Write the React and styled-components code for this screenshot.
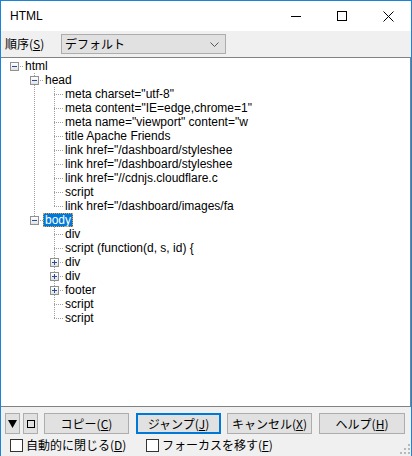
import React from 'react';
import styled, { createGlobalStyle } from 'styled-components';

const Global = createGlobalStyle`
  html, body { margin: 0; padding: 0; background: #f0f0f0; }
  body { width: 412px; height: 456px; overflow: hidden; }
`;

const Window = styled.div`
  width: 412px;
  height: 456px;
  box-sizing: border-box;
  border: 1px solid #1a85d8;
  border-bottom: none;
  display: flex;
  flex-direction: column;
  background: #f0f0f0;
  font-family: "Noto Sans CJK JP", sans-serif;
  font-size: 12px;
  color: #000;
`;

const TitleBar = styled.div`
  height: 30px;
  flex: none;
  background: #fff;
  display: flex;
  align-items: center;
`;

const Title = styled.div`
  flex: 1;
  padding-left: 9px;
  font: 12px "Liberation Sans", sans-serif;
`;

const Ctrl = styled.div`
  width: 46px;
  height: 30px;
  display: flex;
  align-items: center;
  justify-content: center;
`;

const Toolbar = styled.div`
  height: 26px;
  flex: none;
  display: flex;
  align-items: center;
  padding-left: 4px;
`;

const Label = styled.span`
  width: 56px;
  line-height: 16px;
`;

const U = styled.span`
  text-decoration: underline;
  text-underline-offset: 1px;
`;

const Select = styled.div`
  box-sizing: border-box;
  width: 165px;
  height: 20px;
  border: 1px solid #adadad;
  background: #e1e1e1;
  display: flex;
  align-items: center;
  padding: 0 6px 0 3px;
  line-height: 16px;
`;

const SelectText = styled.span`
  flex: 1;
`;

const Panel = styled.div`
  flex: 1;
  background: #fff;
  border: 1px solid #828282;
  border-left: none;
  padding-top: 1px;
  overflow: hidden;
`;

const Row = styled.div`
  display: flex;
  height: 14px;
  align-items: stretch;
`;

const vDots = `
  background-image: linear-gradient(to bottom, #a0a0a0 50%, transparent 50%);
  background-size: 1px 2px;
`;
const hDots = `
  background-image: linear-gradient(to right, #a0a0a0 50%, transparent 50%);
  background-size: 2px 1px;
`;

const Guide = styled.div`
  width: 20px;
  flex: none;
  position: relative;
  &::before {
    content: "";
    display: ${p => (p.$line ? 'block' : 'none')};
    position: absolute;
    left: 13px;
    top: 0;
    width: 1px;
    height: 14px;
    ${vDots}
  }
`;

const Conn = styled.div`
  width: 22px;
  flex: none;
  position: relative;
  &::before {
    content: "";
    display: ${p => (p.$top || p.$bottom ? 'block' : 'none')};
    position: absolute;
    left: 13px;
    top: ${p => (p.$top ? 0 : 7)}px;
    width: 1px;
    height: ${p => (p.$top && p.$bottom ? 14 : 7)}px;
    ${vDots}
  }
  &::after {
    content: "";
    position: absolute;
    left: 13px;
    top: 7px;
    width: 9px;
    height: 1px;
    ${hDots}
  }
`;

const Expander = styled.div`
  position: absolute;
  z-index: 1;
  left: 9px;
  top: 3px;
  width: 9px;
  height: 9px;
  box-sizing: border-box;
  border: 1px solid #919191;
  background: linear-gradient(180deg, #ffffff 0%, #e2e2e2 100%);
  &::before {
    content: "";
    position: absolute;
    left: 1px;
    top: 3px;
    width: 5px;
    height: 1px;
    background: #2a4a9c;
  }
  &::after {
    content: "";
    display: ${p => (p.$open ? 'none' : 'block')};
    position: absolute;
    left: 3px;
    top: 1px;
    width: 1px;
    height: 5px;
    background: #2a4a9c;
  }
`;

const NodeText = styled.span`
  font: 12px/14px "Liberation Sans", sans-serif;
  padding: 0 2px;
  white-space: pre;
  background: ${p => (p.$sel ? '#0078d7' : 'transparent')};
  color: ${p => (p.$sel ? '#fff' : '#000')};
  outline: ${p => (p.$sel ? '1px dotted #f0a030' : 'none')};
  outline-offset: -1px;
`;

const Footer = styled.div`
  height: 49px;
  flex: none;
  padding: 6px 0 0 4px;
  box-sizing: border-box;
  display: flex;
  flex-direction: column;
`;

const ButtonRow = styled.div`
  display: flex;
  height: 21px;
`;

const Btn = styled.div`
  box-sizing: border-box;
  height: 21px;
  width: ${p => p.$w}px;
  margin-right: ${p => p.$gap}px;
  border: 1px solid ${p => (p.$focus ? '#0078d7' : '#adadad')};
  box-shadow: ${p => (p.$focus ? 'inset 0 0 0 1px #0078d7' : 'none')};
  background: #e1e1e1;
  display: flex;
  align-items: center;
  justify-content: center;
  line-height: 16px;
`;

const CheckRow = styled.div`
  display: flex;
  align-items: center;
  height: 22px;
  padding-left: 5px;
`;

const Check = styled.div`
  width: 13px;
  height: 13px;
  box-sizing: border-box;
  border: 1px solid #333;
  background: #fff;
  margin-right: 3px;
`;

const CheckLabel = styled.span`
  width: ${p => p.$w}px;
  line-height: 16px;
`;

const Grip = styled.div`
  margin-left: auto;
  align-self: flex-end;
  display: flex;
  margin-bottom: 2px;
  margin-right: 1px;
`;

const leaf = label => ({ label });

const tree = {
  label: 'html',
  open: true,
  children: [
    {
      label: 'head',
      open: true,
      children: [
        leaf('meta charset="utf-8"'),
        leaf('meta content="IE=edge,chrome=1"'),
        leaf('meta name="viewport" content="w'),
        leaf('title Apache Friends'),
        leaf('link href="/dashboard/styleshee'),
        leaf('link href="/dashboard/styleshee'),
        leaf('link href="//cdnjs.cloudflare.c'),
        leaf('script'),
        leaf('link href="/dashboard/images/fa'),
      ],
    },
    {
      label: 'body',
      open: true,
      selected: true,
      children: [
        leaf('div'),
        leaf('script (function(d, s, id) {'),
        { label: 'div', open: false, children: [leaf('x')] },
        { label: 'div', open: false, children: [leaf('x')] },
        { label: 'footer', open: false, children: [leaf('x')] },
        leaf('script'),
        leaf('script'),
      ],
    },
  ],
};

function flatten(node, guides, isLast, isRoot, out) {
  out.push({ node, guides, isLast, isRoot });
  if (node.children && node.open) {
    node.children.forEach((c, i) =>
      flatten(c, [...guides, !isLast], i === node.children.length - 1, false, out)
    );
  }
  return out;
}

const rows = flatten(tree, [], true, true, []);

const TreeRow = ({ item }) => {
  const { node, guides, isLast, isRoot } = item;
  const hasKids = !!node.children;
  return (
    <Row>
      {guides.map((g, i) => (
        <Guide key={i} $line={g} />
      ))}
      <Conn $top={!isRoot} $bottom={!isLast}>
        {hasKids && <Expander $open={node.open} />}
      </Conn>
      <NodeText $sel={node.selected}>{node.label}</NodeText>
    </Row>
  );
};

export default function App() {
  return (
    <>
      <Global />
      <Window>
        <TitleBar>
          <Title>HTML</Title>
          <Ctrl>
            <svg width="10" height="10" viewBox="0 0 10 10">
              <rect x="0" y="5" width="10" height="1" fill="#000" />
            </svg>
          </Ctrl>
          <Ctrl>
            <svg width="10" height="10" viewBox="0 0 10 10">
              <rect x="0.5" y="0.5" width="9" height="9" fill="none" stroke="#000" strokeWidth="1" />
            </svg>
          </Ctrl>
          <Ctrl>
            <svg width="11" height="11" viewBox="0 0 11 11">
              <path d="M0.5 0.5 L10.5 10.5 M10.5 0.5 L0.5 10.5" stroke="#000" strokeWidth="1" />
            </svg>
          </Ctrl>
        </TitleBar>
        <Toolbar>
          <Label>
            順序(<U>S</U>)
          </Label>
          <Select>
            <SelectText>デフォルト</SelectText>
            <svg width="9" height="5" viewBox="0 0 9 5">
              <path d="M0.5 0.5 L4.5 4.5 L8.5 0.5" fill="none" stroke="#555" strokeWidth="1" />
            </svg>
          </Select>
        </Toolbar>
        <Panel>
          {rows.map((r, i) => (
            <TreeRow key={i} item={r} />
          ))}
        </Panel>
        <Footer>
          <ButtonRow>
            <Btn $w={15} $gap={3}>
              <svg width="9" height="8" viewBox="0 0 9 8">
                <path d="M0 0 H9 L4.5 8 Z" fill="#000" />
              </svg>
            </Btn>
            <Btn $w={15} $gap={6}>
              <svg width="8" height="8" viewBox="0 0 8 8">
                <rect x="0.5" y="0.5" width="7" height="7" fill="none" stroke="#000" />
              </svg>
            </Btn>
            <Btn $w={85} $gap={7}>
              コピー(<U>C</U>)
            </Btn>
            <Btn $w={85} $gap={6} $focus>
              ジャンプ(<U>J</U>)
            </Btn>
            <Btn $w={85} $gap={7}>
              キャンセル(<U>X</U>)
            </Btn>
            <Btn $w={86} $gap={0}>
              ヘルプ(<U>H</U>)
            </Btn>
          </ButtonRow>
          <CheckRow>
            <Check />
            <CheckLabel $w={120}>
              自動的に閉じる(<U>D</U>)
            </CheckLabel>
            <Check />
            <CheckLabel $w={120}>
              フォーカスを移す(<U>F</U>)
            </CheckLabel>
            <Grip>
              <svg width="10" height="10" viewBox="0 0 10 10">
                <g fill="#b8b8b8">
                  <rect x="8" y="0" width="2" height="2" />
                  <rect x="4" y="4" width="2" height="2" />
                  <rect x="8" y="4" width="2" height="2" />
                  <rect x="0" y="8" width="2" height="2" />
                  <rect x="4" y="8" width="2" height="2" />
                  <rect x="8" y="8" width="2" height="2" />
                </g>
              </svg>
            </Grip>
          </CheckRow>
        </Footer>
      </Window>
    </>
  );
}
